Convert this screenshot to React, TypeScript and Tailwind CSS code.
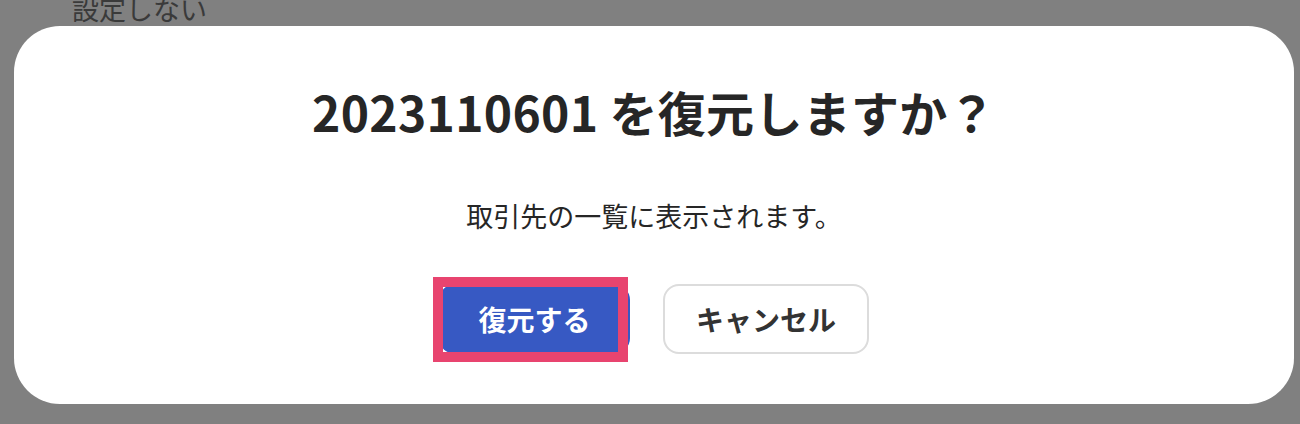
/**
 * Restore Confirmation Dialog
 * Modal asking whether to restore a customer record
 */

const FONT = "font-['Noto_Sans_CJK_JP','Noto_Sans',sans-serif]";

// ============================================================================
// Component
// ============================================================================

export default function App() {
  return (
    <div className={`h-[424px] w-[1300px] overflow-hidden bg-[#808080] ${FONT}`}>
      {/* Page content behind the overlay */}
      <div className="h-[26px] overflow-hidden pl-[72px]">
        <p className="-mt-[6px] text-[27px] leading-[30px] text-[#3a3a3a]">設定しない</p>
      </div>

      {/* Dialog */}
      <div
        role="dialog"
        aria-modal="true"
        className="ml-[14px] flex h-[378px] w-[1280px] flex-col items-center rounded-[46px] bg-white pt-[59px]"
      >
        <h3 className="text-[48px] leading-[52px] font-bold tracking-[0.3px] text-[#262626]">
          2023110601 を復元しますか？
        </h3>
        <p className="mt-[62px] text-[27px] leading-[34px] text-[#262626]">
          取引先の一覧に表示されます。
        </p>

        {/* Actions */}
        <div className="mt-[51px] flex gap-[33px]">
          <div className="relative">
            <button
              type="button"
              className="h-[70px] w-[191px] rounded-[16px] bg-[#3759c3] text-[28px] font-bold text-white"
            >
              復元する
            </button>
            {/* Highlight annotation */}
            <div className="pointer-events-none absolute -left-[6px] -top-[7px] h-[85px] w-[195px] border-[10px] border-[#e8446f]" />
          </div>
          <button
            type="button"
            className="h-[70px] w-[206px] rounded-[16px] border-2 border-[#dcdcdc] bg-white text-[28px] font-bold text-[#333333]"
          >
            キャンセル
          </button>
        </div>
      </div>
    </div>
  );
}
